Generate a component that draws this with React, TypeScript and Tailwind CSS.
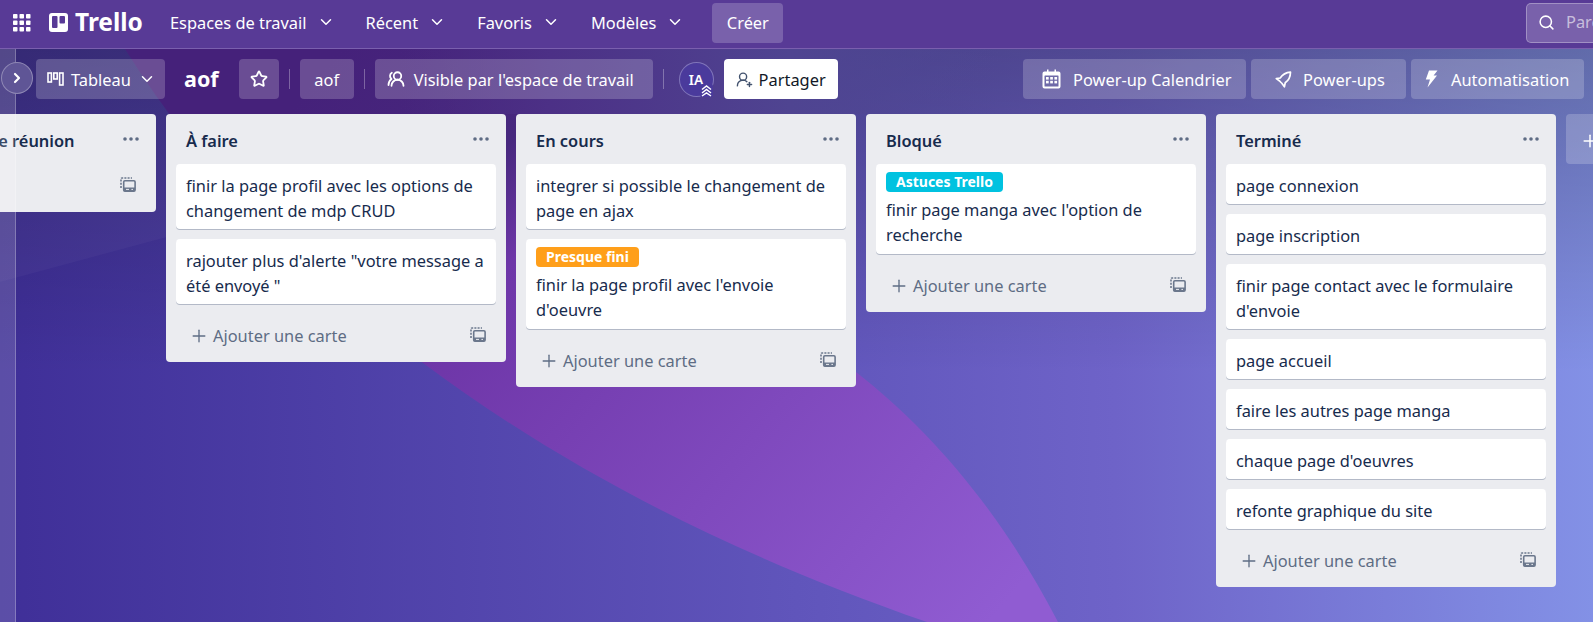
import React from 'react';
import { ChevronDown, ChevronRight, Plus, Search, Star, UserRoundPlus, UsersRound } from 'lucide-react';

type CardData = { text: string; label?: string; labelColor?: string };
type ListData = { title: string; cards: CardData[]; noFooterText?: boolean };

const lists: ListData[] = [
  {
    title: 'À faire',
    cards: [
      { text: 'finir la page profil avec les options de changement de mdp CRUD' },
      { text: 'rajouter plus d\'alerte "votre message a été envoyé "' },
    ],
  },
  {
    title: 'En cours',
    cards: [
      { text: 'integrer si possible le changement de page en ajax' },
      { text: "finir la page profil avec l'envoie d'oeuvre", label: 'Presque fini', labelColor: 'bg-[#ff9f1a]' },
    ],
  },
  {
    title: 'Bloqué',
    cards: [
      { text: "finir page manga avec l'option de recherche", label: 'Astuces Trello', labelColor: 'bg-[#00c2e0]' },
    ],
  },
  {
    title: 'Terminé',
    cards: [
      { text: 'page connexion' },
      { text: 'page inscription' },
      { text: "finir page contact avec le formulaire d'envoie" },
      { text: 'page accueil' },
      { text: 'faire les autres page manga' },
      { text: "chaque page d'oeuvres" },
      { text: 'refonte graphique du site' },
    ],
  },
];

const Backdrop = () => (
  <svg className="absolute inset-0 w-full h-full" viewBox="0 0 1593 622" preserveAspectRatio="none">
    <defs>
      <linearGradient id="base" x1="0" y1="0" x2="1" y2="0">
        <stop offset="0" stopColor="#3f2f98" />
        <stop offset="0.5" stopColor="#6055bb" />
        <stop offset="0.7" stopColor="#6e63c8" />
        <stop offset="1" stopColor="#8391e6" />
      </linearGradient>
      <linearGradient id="shade" x1="0" y1="0" x2="0" y2="1">
        <stop offset="0" stopColor="#000" stopOpacity="0.3" />
        <stop offset="0.6" stopColor="#000" stopOpacity="0" />
      </linearGradient>
      <linearGradient id="violet" gradientUnits="userSpaceOnUse" x1="330" y1="60" x2="1000" y2="610">
        <stop offset="0" stopColor="#45217a" />
        <stop offset="0.22" stopColor="#47287e" />
        <stop offset="0.31" stopColor="#6e36a8" />
        <stop offset="1" stopColor="#905cd2" />
      </linearGradient>
      <linearGradient id="band" gradientUnits="userSpaceOnUse" x1="400" y1="0" x2="1000" y2="0">
        <stop offset="0" stopColor="#4a2b82" stopOpacity="0" />
        <stop offset="0.25" stopColor="#4c3086" />
        <stop offset="0.65" stopColor="#4f4491" />
        <stop offset="1" stopColor="#514a96" stopOpacity="0" />
      </linearGradient>
    </defs>
    <rect width="1593" height="622" fill="url(#base)" />
    <rect width="1593" height="622" fill="url(#shade)" />
    <path d="M0 49 H600 V120 L0 282 Z" fill="#fff" fillOpacity="0.03" />
    <path
      d="M125 49 C200 170 310 280 423 363 C560 465 720 550 927 622 H1058 C1000 510 930 430 856 372 C760 290 680 200 640 49 Z"
      fill="url(#violet)"
    />
    <rect x="400" y="49" width="600" height="65" fill="url(#band)" />
  </svg>
);

const AppGrid = () => (
  <svg width="18" height="18" viewBox="0 0 18 18" fill="#fff">
    {[0, 6.5, 13].map((y) =>
      [0, 6.5, 13].map((x) => <rect key={`${x}-${y}`} x={x} y={y} width="4.5" height="4.5" rx="0.8" />),
    )}
  </svg>
);

const TrelloMark = () => (
  <svg width="19" height="19" viewBox="0 0 19 19">
    <rect width="19" height="19" rx="3" fill="#fff" />
    <rect x="3" y="3" width="5.5" height="12" rx="1" fill="#583a96" />
    <rect x="10.5" y="3" width="5.5" height="7.5" rx="1" fill="#583a96" />
  </svg>
);

const BoardIcon = () => (
  <svg width="17" height="14" viewBox="0 0 17 14" fill="none" stroke="#fff" strokeWidth="1.6">
    <rect x="1" y="1" width="3.4" height="9" />
    <rect x="6.8" y="1" width="3.4" height="6" />
    <rect x="12.6" y="1" width="3.4" height="12" />
  </svg>
);

const CalendarIcon = () => (
  <svg width="19" height="20" viewBox="0 0 19 20">
    <path d="M2.5 2.5 H5 V0.5 H6.5 V2.5 H12.5 V0.5 H14 V2.5 H16.5 A2 2 0 0 1 18.5 4.5 V17.5 A2 2 0 0 1 16.5 19.5 H2.5 A2 2 0 0 1 0.5 17.5 V4.5 A2 2 0 0 1 2.5 2.5 Z" fill="#fff" />
    <rect x="2.5" y="6.5" width="14" height="11" rx="0.5" fill="#6f6aa8" />
    {[8, 11.8].map((y) =>
      [4, 8.2, 12.4].map((x) => <rect key={`${x}-${y}`} x={x} y={y} width="2.7" height="2.6" fill="#fff" />),
    )}
  </svg>
);

const RocketIcon = () => (
  <svg width="17" height="17" viewBox="0 0 17 17" fill="none" stroke="#fff" strokeWidth="1.7" strokeLinejoin="round">
    <path d="M15.5 1.2 C11 1.6 7.5 3.6 5.2 7 L1.3 7.6 L4.6 10 C5.4 10.9 6.2 11.8 7 12.4 L9.4 15.8 L10.2 11.8 C13.6 9.4 15.4 6 15.5 1.2 Z" />
  </svg>
);

const BoltIcon = () => (
  <svg width="13" height="18" viewBox="0 0 13 18" fill="#fff">
    <path d="M4 0.5 H12.5 L8.6 5.6 H12 L2.5 17.5 L5 9.6 H0.8 Z" />
  </svg>
);

const TemplateIcon = () => (
  <svg className="-mt-[3px]" width="16" height="15" viewBox="0 0 16 15" fill="none" stroke="#6b778c">
    <path d="M1 11 V2 A1 1 0 0 1 2 1 H12" strokeWidth="1.6" strokeDasharray="2 1.2" />
    <rect x="3.7" y="3.7" width="11.4" height="10.4" rx="1.2" strokeWidth="1.6" />
    <path d="M3.7 10.4 H15 V13 A1.2 1.2 0 0 1 13.8 14.2 H5 A1.2 1.2 0 0 1 3.7 13 Z" fill="#6b778c" strokeWidth="0" />
    <path d="M6 12.4 H9 M11.4 12.4 H13" stroke="#ebecf0" strokeWidth="1" />
  </svg>
);

const Dots = () => (
  <svg width="16" height="4" viewBox="0 0 16 4" fill="#5e6c84">
    <circle cx="2" cy="2" r="1.8" />
    <circle cx="8" cy="2" r="1.8" />
    <circle cx="14" cy="2" r="1.8" />
  </svg>
);

const NavItem = ({ label, className }: { label: string; className: string }) => (
  <div className={`flex items-center gap-[10px] text-white ${className}`}>
    <span className="pt-[2px]">{label}</span>
    <ChevronDown className="w-[18px] h-[18px]" strokeWidth={2} />
  </div>
);

const Divider = () => <div className="w-px h-[20px] bg-white/30" />;

const GlassButton = ({ children, className }: { children: React.ReactNode; className: string }) => (
  <div className={`h-10 rounded bg-white/20 flex items-center text-white ${className}`}>{children}</div>
);

const Card = ({ card }: { card: CardData }) => (
  <div className={`bg-white rounded mb-[10px] px-[10px] shadow-[0_1px_0_#b3b9c7] text-[#172b4d] ${card.label ? 'pt-2 pb-[7px]' : 'pt-[9px] pb-[6px]'}`}>
    {card.label && (
      <div className={`h-5 w-fit rounded px-[10px] mb-[5px] text-white text-[14px] font-bold leading-5 ${card.labelColor}`}>
        {card.label}
      </div>
    )}
    <div className="leading-[25px]">{card.text}</div>
  </div>
);

const Footer = ({ hideText }: { hideText?: boolean }) => (
  <div className="h-12 flex items-center justify-between pl-[23px] pr-5 pb-[4px] text-[#5e6c84]">
    {hideText ? <span /> : (
      <div className="flex items-center gap-[4px]">
        <Plus className="w-[20px] h-[20px]" strokeWidth={1.6} />
        <span>Ajouter une carte</span>
      </div>
    )}
    <TemplateIcon />
  </div>
);

const List = ({ list, className }: { list: ListData; className?: string }) => (
  <div className={`w-[340px] shrink-0 self-start bg-[#ebecf0] rounded ${className ?? ''}`}>
    <div className="h-[50px] flex items-center justify-between pl-5 pr-[17px]">
      <span className="mt-[4px] font-semibold text-[#172b4d] whitespace-nowrap">{list.title}</span>
      <span className="-mt-[1px]"><Dots /></span>
    </div>
    <div className="px-[10px]">
      {list.cards.map((c) => <Card key={c.text} card={c} />)}
    </div>
    <Footer hideText={list.noFooterText} />
  </div>
);

export default function App() {
  return (
    <div
      className="relative w-[1593px] h-[622px] overflow-hidden flex flex-col text-[16.4px]"
      style={{ fontFamily: '"Noto Sans", "Open Sans", sans-serif' }}
    >
      <Backdrop />

      {/* Top nav */}
      <div className="relative h-[49px] shrink-0 bg-[#583a96] border-b border-[#7a5fae] flex items-center pb-[3px] pl-[13px]">
        <AppGrid />
        <div className="ml-[18px] flex items-center gap-[7px]">
          <TrelloMark />
          <span className="text-white font-bold text-[24.5px] leading-none">Trello</span>
        </div>
        <NavItem label="Espaces de travail" className="ml-[27px]" />
        <NavItem label="Récent" className="ml-[31px]" />
        <NavItem label="Favoris" className="ml-[31px]" />
        <NavItem label="Modèles" className="ml-[31px]" />
        <div className="ml-[28px] w-[71px] h-10 rounded bg-white/20 text-white flex items-center justify-center pt-[2px]">Créer</div>
        <div className="ml-auto w-[67px] h-10 rounded-l-[5px] bg-white/20 border border-r-0 border-white/30 flex items-center pl-[11px] gap-[11px] overflow-hidden">
          <Search className="w-[17px] h-[17px] text-white shrink-0" strokeWidth={2.2} />
          <span className="text-white/60">Parcourir</span>
        </div>
      </div>

      {/* Board header */}
      <div className="relative h-[65px] shrink-0 flex items-center pb-[5px] pl-9 pr-[9px]">
        <GlassButton className="w-[129px] pl-[11px] gap-[7px]">
          <BoardIcon />
          <span className="pt-[2px]">Tableau</span>
          <ChevronDown className="w-[18px] h-[18px]" strokeWidth={2} />
        </GlassButton>
        <span className="ml-[19px] text-white font-bold text-[21.5px]">aof</span>
        <GlassButton className="ml-5 w-10 justify-center">
          <Star className="w-[18px] h-[18px]" strokeWidth={2.4} />
        </GlassButton>
        <div className="ml-[10px]"><Divider /></div>
        <GlassButton className="ml-[10px] w-[54px] justify-center pt-[2px]">aof</GlassButton>
        <div className="ml-[10px]"><Divider /></div>
        <GlassButton className="ml-[10px] w-[278px] pl-[12px] gap-[9px]">
          <UsersRound className="w-[18px] h-[18px] -scale-x-100" strokeWidth={2.4} />
          <span className="pt-[2px]">Visible par l'espace de travail</span>
        </GlassButton>
        <div className="ml-[10px]"><Divider /></div>
        <div className="relative ml-[15px] w-[35px] h-[35px] rounded-full bg-[#4a3a9c] border border-white/30 flex items-center justify-center text-white text-[14px] font-semibold">
          IA
          <svg className="absolute -bottom-[1px] right-0" width="13" height="13" viewBox="0 0 13 13" fill="none" stroke="#fff" strokeWidth="1.5">
            <rect width="13" height="13" rx="2" fill="#4a3a9c" stroke="none" />
            <path d="M2 5.5 L6.5 2 L11 5.5 M2 9 L6.5 5.5 L11 9 M2 12 L6.5 9 L11 12" />
          </svg>
        </div>
        <div className="ml-[10px] w-[114px] h-10 rounded bg-white text-[#111827] flex items-center justify-center gap-[6px]">
          <UserRoundPlus className="w-[17px] h-[17px] text-[#42526e]" strokeWidth={2} />
          <span className="pt-[2px]">Partager</span>
        </div>
        <GlassButton className="ml-auto w-[223px] pl-[19px] gap-[12px]">
          <CalendarIcon />
          <span className="pt-[2px]">Power-up Calendrier</span>
        </GlassButton>
        <GlassButton className="ml-[5px] w-[155px] pl-6 gap-[11px]">
          <RocketIcon />
          <span className="pt-[2px]">Power-ups</span>
        </GlassButton>
        <GlassButton className="ml-[5px] w-[173px] pl-[14px] gap-[13px]">
          <BoltIcon />
          <span className="pt-[2px]">Automatisation</span>
        </GlassButton>
      </div>

      {/* Lists */}
      <div className="relative flex-1 flex gap-[10px] -ml-[184px]">
        <List list={{ title: 'Sujets à revoir lors de réunion', cards: [], noFooterText: true }} />
        {lists.map((l) => <List key={l.title} list={l} />)}
        <div className="w-[340px] h-[50px] shrink-0 rounded bg-white/20 flex items-center pl-[14px] pt-[3px] text-white">
          <Plus className="w-[20px] h-[20px]" strokeWidth={1.8} />
        </div>
      </div>

      {/* Collapsed sidebar, laid over the first list */}
      <div className="absolute left-0 top-[49px] bottom-0 w-4 bg-white/15 border-r border-white/25" />
      <div className="absolute left-[1px] top-[62px] w-8 h-8 rounded-full bg-[#5f5596] border border-white/30 flex items-center justify-center text-white">
        <ChevronRight className="w-[16px] h-[16px]" strokeWidth={3.2} />
      </div>
    </div>
  );
}
